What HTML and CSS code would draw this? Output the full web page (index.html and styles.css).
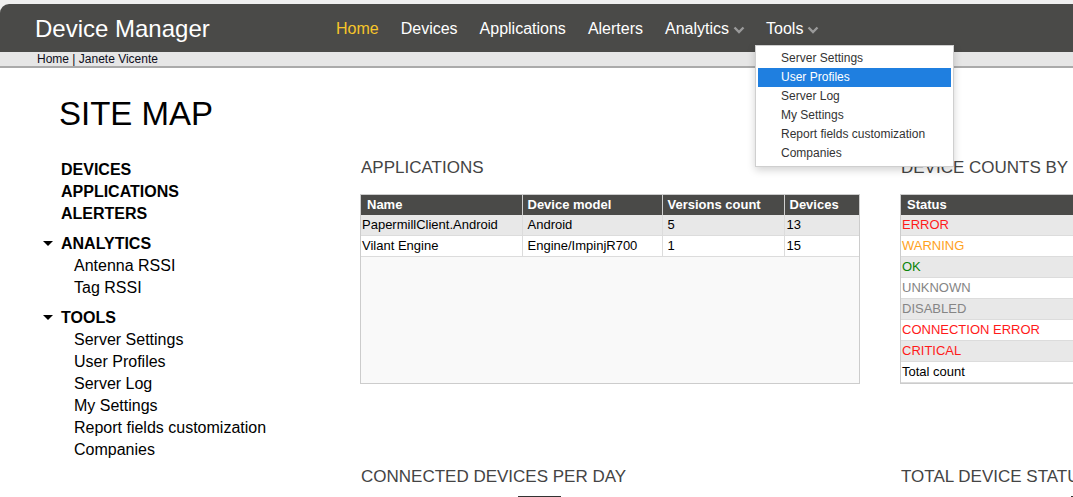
FILE: index.html
```html
<!DOCTYPE html>
<html lang="en">
<head>
<meta charset="utf-8">
<title>Device Manager - Site Map</title>
<link rel="stylesheet" href="styles.css">
</head>
<body>
<header class="topbar">
  <div class="brandbar">
    <div class="brand">Device Manager</div>
    <nav class="mainnav">
      <a class="navlink active">Home</a>
      <a class="navlink">Devices</a>
      <a class="navlink">Applications</a>
      <a class="navlink">Alerters</a>
      <a class="navlink has-menu">Analytics <svg class="chev" viewBox="0 0 12 8" width="12" height="8"><path d="M1.5 1.5 L6 6 L10.5 1.5" fill="none" stroke="#9a9a9a" stroke-width="2.4"/></svg></a>
      <div class="navitem">
        <a class="navlink has-menu">Tools <svg class="chev" viewBox="0 0 12 8" width="12" height="8"><path d="M1.5 1.5 L6 6 L10.5 1.5" fill="none" stroke="#9a9a9a" stroke-width="2.4"/></svg></a>
        <ul class="dropdown">
          <li>Server Settings</li>
          <li class="hover">User Profiles</li>
          <li>Server Log</li>
          <li>My Settings</li>
          <li>Report fields customization</li>
          <li>Companies</li>
        </ul>
      </div>
    </nav>
  </div>
  <div class="crumbs">Home | Janete Vicente</div>
</header>

<main class="page">
  <aside class="sidebar">
    <h1 class="sitemap-title">SITE MAP</h1>
    <ul class="map">
      <li class="top">DEVICES</li>
      <li class="top">APPLICATIONS</li>
      <li class="top">ALERTERS</li>
      <li class="group">
        <div class="top caret">ANALYTICS</div>
        <ul class="sub">
          <li>Antenna RSSI</li>
          <li>Tag RSSI</li>
        </ul>
      </li>
      <li class="group">
        <div class="top caret">TOOLS</div>
        <ul class="sub">
          <li>Server Settings</li>
          <li>User Profiles</li>
          <li>Server Log</li>
          <li>My Settings</li>
          <li>Report fields customization</li>
          <li>Companies</li>
        </ul>
      </li>
    </ul>
  </aside>

  <section class="panels">
    <div class="panel">
      <h2 class="panel-title">APPLICATIONS</h2>
      <div class="gridbox apps">
        <table class="grid">
          <colgroup><col class="c1"><col class="c2"><col class="c3"><col class="c4"></colgroup>
          <thead><tr><th>Name</th><th>Device model</th><th>Versions count</th><th>Devices</th></tr></thead>
          <tbody>
            <tr class="alt"><td class="first">PapermillClient.Android</td><td>Android</td><td>5</td><td class="last">13</td></tr>
            <tr><td class="first">Vilant Engine</td><td>Engine/ImpinjR700</td><td>1</td><td class="last">15</td></tr>
          </tbody>
        </table>
      </div>
    </div>
    <div class="panel wide">
      <h2 class="panel-title">DEVICE COUNTS BY</h2>
      <div class="gridbox counts">
        <table class="grid">
          <thead><tr><th>Status</th></tr></thead>
          <tbody>
            <tr class="alt"><td class="first s-red">ERROR</td></tr>
            <tr><td class="first s-orange">WARNING</td></tr>
            <tr class="alt"><td class="first s-green">OK</td></tr>
            <tr><td class="first s-gray">UNKNOWN</td></tr>
            <tr class="alt"><td class="first s-gray">DISABLED</td></tr>
            <tr><td class="first s-red">CONNECTION ERROR</td></tr>
            <tr class="alt"><td class="first s-red">CRITICAL</td></tr>
            <tr><td class="first">Total count</td></tr>
          </tbody>
        </table>
      </div>
    </div>
    <div class="panel lower">
      <h2 class="panel-title">CONNECTED DEVICES PER DAY</h2>
      <div class="chart"><span class="tick t1"></span></div>
    </div>
    <div class="panel lower wide">
      <h2 class="panel-title">TOTAL DEVICE STATU</h2>
      <div class="chart"><span class="tick t2"></span></div>
    </div>
  </section>
</main>
</body>
</html>
```

FILE: styles.css
```css
html, body {
  margin: 0;
  padding: 0;
  overflow: hidden;
}
body {
  font-family: "Liberation Sans", Arial, sans-serif;
  color: #000;
  background: #fff;
  width: 1073px;
  height: 497px;
}
ul { list-style: none; margin: 0; padding: 0; }
h1, h2 { margin: 0; font-weight: normal; }

/* ---------- header ---------- */
.topbar {
  background: #efefef;
  padding-top: 4px;
  position: relative;
  z-index: 5;
}
.brandbar {
  height: 48px;
  background: #4a4a48;
  border-top-left-radius: 9px;
  display: flex;
  align-items: center;
  padding-left: 35px;
}
.brand {
  color: #fff;
  font-size: 24px;
  width: 174px;
  flex: none;
  white-space: nowrap;
  line-height: 28px;
  margin-top: 2px;
}
.mainnav {
  display: flex;
  align-items: center;
  margin-left: 127px;
  margin-top: 2px;
  gap: 22px;
}
.navlink {
  color: #fff;
  font-size: 16px;
  line-height: 20px;
  display: flex;
  align-items: center;
  gap: 4px;
  white-space: nowrap;
}
.navlink.active { color: #f7c52a; }
.navlink.has-menu { gap: 4px; }
.chev { display: block; margin-top: 2px; }
.navitem { position: relative; margin-left: -1px; }
.dropdown {
  position: absolute;
  left: -11px;
  top: 26px;
  width: 193px;
  padding: 3px 2px;
  background: #fff;
  border: 1px solid #cfcfcf;
  box-shadow: 0 3px 8px rgba(0,0,0,0.18);
}
.dropdown li {
  font-size: 12px;
  line-height: 19px;
  height: 19px;
  padding-left: 23px;
  color: #333;
  white-space: nowrap;
}
.dropdown li.hover {
  background: #1f7fe0;
  color: #fff;
}
.crumbs {
  height: 14px;
  background: #e6e6e6;
  border-bottom: 2px solid #aaaaaa;
  font-size: 12px;
  line-height: 15px;
  padding-left: 37px;
  color: #0d0d1a;
}

/* ---------- page ---------- */
.page {
  display: flex;
  align-items: flex-start;
}
.sidebar {
  width: 360px;
  padding-left: 59px;
  box-sizing: border-box;
  flex: none;
  padding-top: 26px;
}
.sitemap-title {
  font-size: 33px;
  line-height: 40px;
  color: #000;
}
.map {
  margin-top: 25px;
}
.map .top {
  font-size: 16px;
  font-weight: bold;
  line-height: 22px;
  margin-left: 2px;
}
.map .group { margin-top: 8px; }
.map .caret { position: relative; }
.map .caret::before {
  content: "";
  position: absolute;
  left: -18px;
  top: 8px;
  border-left: 5px solid transparent;
  border-right: 5px solid transparent;
  border-top: 5px solid #000;
}
.map .sub li {
  font-size: 16px;
  line-height: 22px;
  padding-left: 15px;
}

/* ---------- panels ---------- */
.panels {
  display: grid;
  grid-template-columns: 500px 173px;
  column-gap: 40px;
  padding-top: 90px;
  flex: none;
}
.panel-title {
  font-size: 17px;
  line-height: 20px;
  color: #444;
  padding-left: 1px;
  margin-bottom: 16px;
  white-space: nowrap;
}
.gridbox {
  border: 1px solid #cccccc;
  background: #f9f9f9;
  box-sizing: border-box;
}
.gridbox.apps { height: 190px; }
.gridbox.counts {
  height: 190px;
  width: 260px;
  background: #fff;
}
.grid {
  border-collapse: collapse;
  width: 100%;
  table-layout: fixed;
  font-size: 13px;
}
.grid col.c1 { width: 161px; }
.grid col.c2 { width: 140px; }
.grid col.c3 { width: 122px; }
.grid th {
  background: #4a4a48;
  color: #fff;
  text-align: left;
  font-weight: bold;
  height: 20px;
  line-height: 20px;
  padding: 0 0 0 5px;
  border-left: 1px solid #d0d0d0;
  white-space: nowrap;
}
.grid th:first-child { border-left: none; padding-left: 6px; }
.grid td {
  height: 20px;
  line-height: 20px;
  padding: 0 0 0 5px;
  border-left: 1px solid #dcdcdc;
  border-bottom: 1px solid #dcdcdc;
  background: #fff;
  white-space: nowrap;
}
.grid td.first { border-left: none; padding-left: 1px; }
.grid td.last { padding-left: 2px; }
.grid tr.alt td { background: #e8e8e8; }

.s-red { color: #ff1a1a; }
.s-orange { color: #ffa21c; }
.s-green { color: #0a840a; }
.s-gray { color: #858585; }

.panel.lower { margin-top: 83px; }
.panel.lower .panel-title { margin-bottom: 0; }
.chart {
  position: relative;
  height: 11px;
}
.tick {
  position: absolute;
  top: 9px;
  height: 2px;
  background: #333;
}
.tick.t1 { left: 158px; width: 43px; }
.tick.t2 { left: 171px; width: 43px; }
```
